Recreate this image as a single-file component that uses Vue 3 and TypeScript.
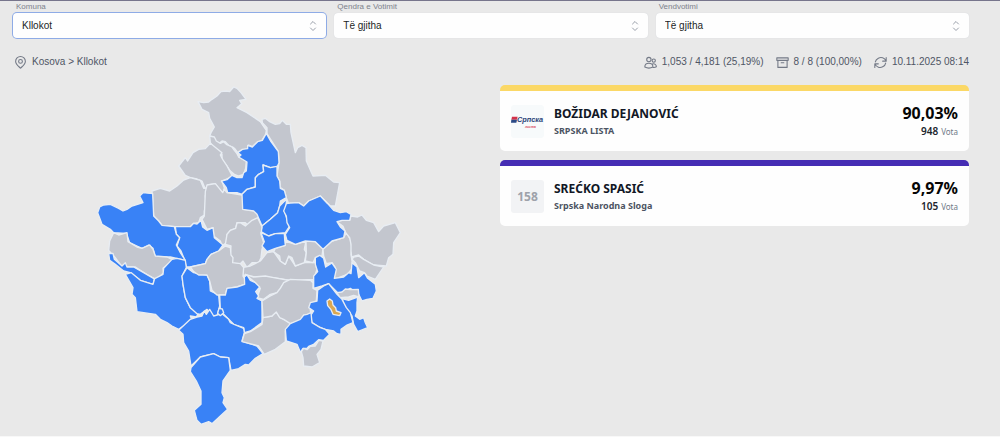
<script setup lang="ts">
import { ref } from 'vue'

interface Filter {
  id: string
  label: string
  options: string[]
  active: boolean
}

interface Candidate {
  name: string
  party: string
  percent: string
  votes: string
  color: string
  code: string
}

interface Region {
  tone: 'grey' | 'blue' | 'gold'
  points: string
}

const filters: Filter[] = [
  { id: 'komuna', label: 'Komuna', options: ['Kllokot'], active: true },
  { id: 'qendra', label: 'Qendra e Votimit', options: ['Të gjitha'], active: false },
  { id: 'vendvotimi', label: 'Vendvotimi', options: ['Të gjitha'], active: false },
]
const chosen = ref<string[]>(filters.map((f) => f.options[0]))

const candidates: Candidate[] = [
  { name: 'BOŽIDAR DEJANOVIĆ', party: 'SRPSKA LISTA', percent: '90,03%', votes: '948', color: '#fbd866', code: '' },
  { name: 'SREĆKO SPASIĆ', party: 'Srpska Narodna Sloga', percent: '9,97%', votes: '105', color: '#452db4', code: '158' },
]

const regions: Region[] = [
  { tone: 'grey', points: '593,302 610,305 625,303 635,295 650,285 662,272 678,270 688,272 700,258 710,262 722,275 737,295 718,298 724,308 716,315 710,320 740,335 780,362 798,388 796,400 785,418 770,424 756,437 745,432 742,443 712,455 705,445 700,440 685,433 675,422 665,420 655,428 645,420 642,410 628,405 632,395 642,378 635,365 628,352 625,335 605,325' },
  { tone: 'grey', points: '628,405 642,408 648,420 660,427 670,422 678,430 695,438 702,448 710,458 715,468 738,480 736,502 730,520 715,525 702,520 690,510 680,495 665,475 665,460 655,452 640,440 630,425' },
  { tone: 'grey', points: '630,427 665,455 660,462 667,475 680,495 695,523 692,528 665,540 672,560 668,578 655,562 645,548 622,552 615,565 605,540 590,534 570,530 555,523 535,495 555,470 562,480 578,455 595,445 615,443' },
  { tone: 'grey', points: '455,570 480,562 508,570 530,555 550,537 570,530 600,538 610,562 620,562 615,585 618,610 612,630 612,642 600,650 595,665 580,667 570,677 525,677 485,673 475,660 460,645' },
  { tone: 'grey', points: '620,552 645,548 655,560 667,575 672,565 680,575 725,582 727,585 730,625 755,628 770,632 780,650 760,670 745,675 735,665 710,665 706,682 690,688 680,700 678,725 665,735 660,720 640,705 638,680 620,685 605,655 612,645 615,572' },
  { tone: 'grey', points: '785,355 795,352 808,362 825,370 838,368 846,358 858,370 870,370 872,395 885,455 892,440 905,433 917,440 918,480 938,525 975,523 1000,543 1018,545 1005,615 990,615 960,585 925,600 910,615 895,605 865,608 858,590 852,568 840,560 838,540 830,525 836,485 834,452 800,398 800,380 786,365' },
  { tone: 'blue', points: '712,455 726,445 742,443 742,433 756,438 772,422 786,418 798,397 812,422 834,452 836,485 830,498 810,500 788,492 790,512 775,520 765,530 765,558 740,565 725,580 710,575 682,575 678,560 663,540 680,536 695,523 710,530 725,530 730,515 738,510 740,483 715,468 722,462' },
  { tone: 'blue', points: '788,492 810,500 830,496 830,525 838,540 840,562 852,568 858,590 840,600 838,615 832,635 810,655 785,675 770,640 760,630 727,625 725,580 740,565 765,558 765,530 775,520 790,512' },
  { tone: 'blue', points: '858,595 858,620 852,630 858,648 868,675 855,695 825,698 805,705 782,692 785,675 810,655 832,635 838,615' },
  { tone: 'grey', points: '680,700 690,688 706,682 710,666 720,665 735,675 755,658 772,650 785,678 782,700 790,725 785,745 782,770 775,785 755,785 740,800 728,780 720,788 695,788 696,770 690,762 692,735 675,730' },
  { tone: 'grey', points: '725,800 750,795 780,780 800,755 820,752 840,780 855,790 865,765 885,795 910,785 945,785 950,805 940,835 870,838 820,830 765,828 745,825 728,822' },
  { tone: 'grey', points: '735,820 760,828 795,825 820,830 865,838 850,848 840,862 830,875 810,880 790,895 770,890 780,862 765,845' },
  { tone: 'grey', points: '855,720 885,730 917,720 912,745 918,755 912,785 885,795 875,770 865,765 855,790 840,780 838,765 820,752 825,742 855,733' },
  { tone: 'grey', points: '917,720 945,722 968,742 965,765 945,770 938,785 915,780 918,755' },
  { tone: 'blue', points: '782,695 805,705 825,698 852,698 853,715 855,733 825,742 800,752 785,735 792,722' },
  { tone: 'grey', points: '968,745 995,720 1030,710 1038,695 1050,715 1055,740 1052,760 1058,800 1040,820 1010,832 1000,832 1005,800 995,785 978,788 970,765' },
  { tone: 'grey', points: '1010,662 1025,658 1048,658 1052,645 1072,648 1085,642 1098,658 1120,665 1135,692 1150,675 1185,665 1200,695 1180,725 1178,760 1165,770 1158,795 1120,792 1090,775 1075,762 1054,768 1052,750 1052,730 1048,710 1036,695 1028,676' },
  { tone: 'blue', points: '858,608 870,606 895,605 910,615 925,600 960,585 982,608 1000,628 1020,635 1038,632 1052,640 1048,658 1025,658 1010,662 1020,678 1034,690 1030,710 995,720 968,745 945,722 915,720 885,730 860,718 855,700 868,680 860,665 858,645 850,630' },
  { tone: 'grey', points: '1060,768 1075,765 1090,775 1120,792 1150,798 1125,835 1100,825 1092,815 1078,810 1065,785 1055,775' },
  { tone: 'blue', points: '525,677 570,677 580,667 590,669 602,658 607,678 620,688 638,680 642,710 668,732 655,750 632,760 620,775 615,788 570,798 558,798 552,775 542,750 530,735 538,710 528,700' },
  { tone: 'blue', points: '418,585 428,575 457,578 460,645 475,660 485,673 522,677 528,700 538,710 528,732 540,755 555,778 510,768 465,768 458,742 445,732 425,742 410,735 388,725 378,697 340,695 330,685 305,670 292,635 298,618 310,612 330,610 355,622 368,630 380,625 395,615 428,605' },
  { tone: 'grey', points: '340,695 355,702 380,695 383,722 410,738 425,742 448,732 458,745 465,765 500,768 515,775 508,785 488,802 490,815 475,830 465,834 435,818 405,798 365,798 345,770 325,748 328,720' },
  { tone: 'blue', points: '325,758 338,757 342,775 365,795 375,785 380,798 400,798 435,818 462,834 458,850 420,838 390,815 370,810 345,790 328,778' },
  { tone: 'blue', points: '515,775 530,772 555,778 558,800 545,825 548,850 555,890 570,920 595,935 588,948 570,945 575,958 535,985 515,975 500,965 480,955 465,940 430,935 410,932 405,890 395,880 398,860 375,820 393,815 420,838 458,850 463,833 488,820 490,802' },
  { tone: 'blue', points: '560,800 580,815 620,822 628,840 630,870 655,882 658,915 650,945 635,945 620,925 600,940 590,938 570,920 555,890 548,850 545,825' },
  { tone: 'grey', points: '570,798 615,788 620,775 632,760 655,750 675,735 690,740 692,762 698,770 697,785 720,788 730,800 728,825 735,835 733,850 710,858 680,862 675,882 650,882 635,868 628,840 620,822 595,822 580,812' },
  { tone: 'blue', points: '658,882 675,882 680,862 710,858 733,850 732,828 740,822 750,838 765,845 778,858 766,872 775,885 770,892 785,900 785,965 750,990 732,995 730,980 700,970 685,955 670,940 660,925' },
  { tone: 'blue', points: '535,988 570,955 590,948 605,945 612,930 618,940 628,925 640,945 665,938 685,955 690,965 705,972 730,982 732,995 725,1020 770,1035 788,1058 765,1072 745,1092 735,1090 715,1103 692,1108 685,1070 660,1068 640,1058 600,1068 572,1095 565,1050 550,1025 548,1000' },
  { tone: 'blue', points: '652,937 656,922 666,924 670,935 660,944' },
  { tone: 'blue', points: '572,1100 600,1068 640,1058 660,1068 685,1070 690,1108 668,1140 665,1175 672,1190 668,1205 682,1225 660,1245 635,1268 625,1262 602,1270 590,1258 582,1228 602,1210 602,1170 588,1140 570,1112' },
  { tone: 'grey', points: '788,950 815,945 822,935 828,935 840,950 870,965 872,978 855,990 855,1022 825,1045 792,1060 775,1035 725,1022 732,998 750,992 785,970' },
  { tone: 'grey', points: '785,900 810,885 830,875 840,862 850,845 870,835 930,838 938,845 938,862 950,868 948,900 928,915 932,940 905,952 900,960 870,968 850,955 838,950 828,933 815,945 788,950' },
  { tone: 'blue', points: '945,770 958,763 970,772 976,798 995,786 1008,805 1002,832 1030,828 1045,815 1052,818 1055,785 1070,798 1075,830 1092,815 1102,832 1125,850 1128,870 1118,892 1100,895 1085,900 1075,880 1050,862 1015,878 985,848 965,855 940,862 940,825 952,812 945,790' },
  { tone: 'blue', points: '1025,893 1045,898 1072,888 1070,905 1070,930 1065,945 1078,955 1090,950 1095,965 1102,980 1072,992 1060,970 1055,945 1035,920' },
  { tone: 'grey', points: '1010,875 1025,873 1035,864 1050,866 1074,865 1076,888 1060,883 1045,888 1018,890' },
  { tone: 'blue', points: '985,848 1010,880 1025,895 1038,920 1050,935 1058,965 1040,972 1022,985 1022,1000 1010,998 1000,990 975,985 955,978 935,965 930,945 940,930 925,920 930,905 950,900 952,868 970,855' },
  { tone: 'blue', points: '855,985 870,968 900,955 910,942 920,940 932,935 935,965 960,980 975,985 988,1000 970,1018 955,1016 940,1030 925,1036 920,1042 908,1042 900,1054 890,1030 858,1020' },
  { tone: 'grey', points: '903,1052 910,1042 920,1046 930,1036 945,1035 955,1018 968,1020 962,1045 950,1060 958,1085 935,1098 910,1095 908,1070' },
  { tone: 'gold', points: '980,900 988,894 996,900 998,912 1006,920 1008,930 1022,935 1018,944 998,940 992,926 982,914' },
]
</script>

<template>
  <main class="page">
    <form class="filters" @submit.prevent>
      <div v-for="(f, i) in filters" :key="f.id" class="field">
        <label :for="f.id">{{ f.label }}</label>
        <div class="control">
          <select :id="f.id" v-model="chosen[i]" :class="{ active: f.active }">
            <option v-for="o in f.options" :key="o">{{ o }}</option>
          </select>
          <svg class="chevrons" viewBox="0 0 8 12" aria-hidden="true">
            <path d="M1.5 4 4 1.5 6.5 4M1.5 8 4 10.5 6.5 8" />
          </svg>
        </div>
      </div>
    </form>

    <div class="info">
      <div class="item crumbs">
        <svg class="icon" viewBox="0 0 24 24" aria-hidden="true">
          <path d="M12 22.500C8 18.500 3 15 3 10A9 9 0 0 1 21 10C21 15 16 18.500 12 22.500Z" />
          <circle cx="12" cy="10" r="3.500" />
        </svg>
        <span>Kosova &gt; Kllokot</span>
      </div>
      <div class="item">
        <svg class="icon" viewBox="0 0 24 24" aria-hidden="true">
          <circle cx="9" cy="6.500" r="4" />
          <circle cx="18" cy="8.500" r="3" />
          <path d="M1.500 20.500C1.500 16 4.500 13.500 9 13.500S16.500 16 16.500 20.500C12 22.800 6 22.800 1.500 20.500ZM15.500 14.800C19.500 13.500 23 16 22.800 20C21 21 19 21.300 16.800 21" />
        </svg>
        <span>1,053 / 4,181 (25,19%)</span>
      </div>
      <div class="item">
        <svg class="icon" viewBox="0 0 24 24" aria-hidden="true">
          <path d="M1.500 3.500H22.500V8H1.500ZM3.500 8V21H20.500V8M9.500 12.500H14.500" />
        </svg>
        <span>8 / 8 (100,00%)</span>
      </div>
      <div class="item">
        <svg class="icon" viewBox="0 0 24 24" aria-hidden="true">
          <path d="M16 9.500H22.500V3M22 9C19.500 3 13 1.500 8 4C5 5.500 3 8 2.500 11M8 14.500H1.500V21M2 15C4.500 21 11 22.500 16 20C19 18.500 21 16 21.500 13" />
        </svg>
        <span>10.11.2025 08:14</span>
      </div>
    </div>

    <div class="results">
      <svg class="map" viewBox="284 252 918 1023" role="img" aria-label="Kosova">
        <polygon v-for="(r, i) in regions" :key="i" :class="r.tone" :points="r.points" />
      </svg>

      <section class="cards">
        <article v-for="c in candidates" :key="c.name" class="card" :style="{ borderTopColor: c.color }">
          <div v-if="c.code" class="badge">{{ c.code }}</div>
          <svg v-else class="badge logo" viewBox="0 0 99 99" role="img" aria-label="Српска листа">
            <path d="M3 35H20L17 44H1Z" fill="#d3324a" />
            <path d="M1 44H18L16 53H0Z" fill="#2b4a86" />
            <text x="18" y="51" class="logo-name">Српска</text>
            <text x="42" y="68" class="logo-sub">листа</text>
          </svg>
          <div class="who">
            <h2>{{ c.name }}</h2>
            <p>{{ c.party }}</p>
          </div>
          <div class="score">
            <strong>{{ c.percent }}</strong>
            <p><b>{{ c.votes }}</b><span>Vota</span></p>
          </div>
        </article>
      </section>
    </div>
  </main>
</template>

<style>
body {
  margin: 0;
  background: #e9e9e9;
}
</style>

<style scoped>
.page {
  box-sizing: border-box;
  min-height: 100vh;
  padding: 0 31px 8px 13px;
  border-top: 1px solid #77758c;
  border-bottom: 1px solid #f8f8f8;
  background: #e9e9e9;
  font-family: "Liberation Sans", Arial, sans-serif;
  color: #4f5665;
}

.filters {
  display: grid;
  grid-template-columns: repeat(3, 1fr);
  gap: 8px;
}

.field label {
  display: block;
  margin-left: 3px;
  font-size: 8px;
  line-height: 12px;
  color: #7d828c;
}

.control {
  position: relative;
}

.control select {
  display: block;
  box-sizing: border-box;
  width: 100%;
  height: 25px;
  padding: 0 24px 0 9px;
  border: 0;
  border-radius: 4px;
  background: #fefefe;
  box-shadow: 0 0 1px #c9ccd2;
  appearance: none;
  font: 10px "Liberation Sans", Arial, sans-serif;
  color: #1c1f26;
  outline: none;
}

.control select.active,
.control select:focus {
  box-shadow: 0 0 0 1px #8eabe6;
}

.chevrons {
  position: absolute;
  top: 7px;
  right: 9px;
  width: 8px;
  height: 12px;
  fill: none;
  stroke: #9aa0aa;
  stroke-linecap: round;
  stroke-linejoin: round;
  pointer-events: none;
}

.info {
  display: flex;
  align-items: center;
  gap: 12px;
  margin-top: 16px;
  font-size: 10px;
  line-height: 16px;
}

.item {
  display: flex;
  align-items: center;
  gap: 5px;
  white-space: nowrap;
}

.crumbs {
  margin-right: auto;
  padding-left: 1px;
}

.icon {
  flex: none;
  width: 13px;
  height: 13px;
  fill: none;
  stroke: #747a87;
  stroke-width: 2;
  stroke-linecap: round;
  stroke-linejoin: round;
}

.results {
  display: grid;
  grid-template-columns: 1fr 1fr;
  gap: 18px;
  align-items: start;
  margin-top: 15px;
}

.map {
  justify-self: center;
  display: block;
  width: 100%;
  max-width: 306px;
}

.map polygon {
  stroke: #e8edf3;
  stroke-width: 4;
  stroke-linejoin: round;
}

.grey {
  fill: #c3c6ce;
}

.blue {
  fill: #3982f6;
}

.gold {
  fill: #d9a752;
}

.cards {
  display: grid;
  gap: 9px;
  font-family: "Noto Sans", sans-serif;
}

.card {
  display: flex;
  align-items: center;
  gap: 10px;
  padding: 12px 11px 11px;
  border-top: 6px solid;
  border-radius: 5px;
  background: #fefefe;
}

.badge {
  flex: none;
  width: 33px;
  height: 33px;
  border-radius: 3px;
  background: #f2f3f5;
  font-size: 12px;
  font-weight: 700;
  line-height: 33px;
  text-align: center;
  color: #9ea2aa;
}

.logo {
  background: #f7fafb;
}

.logo-name {
  font: italic 700 22px "Liberation Sans", Arial, sans-serif;
  fill: #2b4478;
}

.logo-sub {
  font: italic 700 10px "Liberation Sans", Arial, sans-serif;
  fill: #d9535f;
}

.who {
  flex: 1;
}

.who h2,
.who p,
.score p {
  margin: 0;
}

.who h2 {
  font-size: 12px;
  font-weight: 700;
  line-height: 18px;
  color: #121826;
}

.who p {
  font-size: 9px;
  font-weight: 700;
  line-height: 15px;
  color: #4c5462;
}

.score {
  text-align: right;
}

.score strong {
  display: block;
  font-size: 16px;
  font-weight: 700;
  line-height: 20px;
  color: #060606;
}

.score p {
  display: flex;
  align-items: baseline;
  justify-content: flex-end;
  gap: 3px;
  font-size: 8px;
  line-height: 16px;
  color: #707a88;
}

.score b {
  font-size: 10px;
  font-weight: 600;
  color: #20242c;
}
</style>
